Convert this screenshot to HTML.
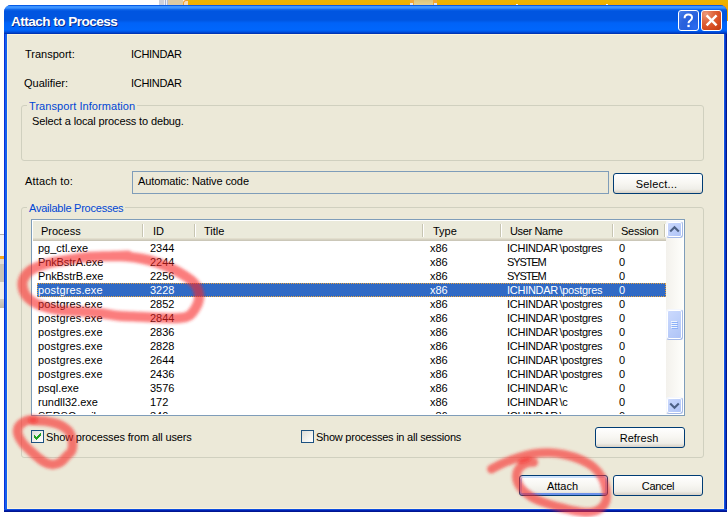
<!DOCTYPE html>
<html><head><meta charset="utf-8"><title>Attach to Process</title>
<style>
html,body{margin:0;padding:0;background:#fff;}
body{width:728px;height:517px;position:relative;overflow:hidden;font-family:"Liberation Sans",sans-serif;font-size:11px;color:#000;}
.abs{position:absolute;}
.t{position:absolute;white-space:nowrap;line-height:13px;height:13px;}
#win{position:absolute;left:4px;top:5px;width:723px;height:507px;background:linear-gradient(to right,#0831d9 0,#0831d9 1px,#1560eb 1px,#1560eb 3px,#0f5ae6 3px,#0f5ae6 720px,#1254e0 720px,#1254e0 721px,#0a36c8 721px,#0a36c8 722px,#001a8c 722px);border-radius:7px 7px 0 0;overflow:hidden;}
#tb{position:absolute;left:0;top:0;width:723px;height:29px;background:linear-gradient(to bottom,#0058e6 0px,#0a5fe8 1px,#3d93ff 1.5px,#3d93ff 3px,#1068ec 4.5px,#0055e0 6px,#0055e0 15px,#0063f8 18px,#0066fc 25px,#0050e0 27px,#0035b5 28.5px,#0035b5 29px);}
#title{position:absolute;left:7px;top:8px;color:#fff;font-weight:bold;font-size:13.6px;line-height:17px;letter-spacing:-0.55px;text-shadow:1px 1px 0 #0a2a8a;white-space:nowrap;}
#body{position:absolute;left:3px;top:29px;width:717px;height:475px;background:#ece9d8;box-shadow:inset 0 0 0 1px #fcf4dc;}
.gb{position:absolute;border:1px solid #d0d0bf;border-radius:3px;box-sizing:border-box;}
.gbl{position:absolute;color:#0046d5;background:#ece9d8;padding:0 2px;white-space:nowrap;line-height:13px;}
.btn{position:absolute;box-sizing:border-box;height:21px;border:1px solid #003c74;border-radius:3px;background:linear-gradient(to bottom,#ffffff 0%,#f8f7f3 45%,#efeee8 80%,#d6d0c5 100%);text-align:center;line-height:20px;}
.btn.def{box-shadow:inset 0 -2px 0 #6d92ea, inset 0 2px 0 #cde2fc, inset 2px 0 0 #a9c5f5, inset -2px 0 0 #a9c5f5;}
.cb{position:absolute;box-sizing:border-box;width:13px;height:13px;border:1px solid #1c5180;background:linear-gradient(135deg,#dcdcd7 0%,#f3f3ef 60%,#ffffff 100%);}
#lv{position:absolute;left:31px;top:219px;width:654px;height:197px;box-sizing:border-box;border:1px solid #7f9db9;background:#fff;overflow:hidden;}
#hdr{position:absolute;left:1px;top:1px;width:633px;height:20px;box-sizing:border-box;background:#ebeadb;border-bottom:1px solid #cbc7b8;box-shadow:inset 0 -1px 0 #d6d2c2, inset 0 -2px 0 #e2decd;}
#hdr span{position:absolute;top:4px;line-height:13px;white-space:nowrap;}
#hdr i{position:absolute;top:3px;width:1px;height:13px;background:#c7c5b2;border-right:1px solid #fff;}
.row{position:absolute;left:1px;width:633px;height:14px;}
.row span{position:absolute;top:0;line-height:14px;white-space:nowrap;}
.row em{font-style:normal;margin-left:1.4px;}
.row.sel{color:#fff;}
.row.sel:before{content:"";position:absolute;left:4px;top:0;width:629px;height:14px;box-sizing:border-box;background:#316ac5;border:1px dotted #e8a33d;}
#sb{position:absolute;left:634px;top:1px;width:17px;height:193px;background:linear-gradient(to right,#f3f1ec,#fefefb);}
.sbb{position:absolute;left:0;width:17px;box-sizing:border-box;border:1px solid;border-color:#f4f7fe #a6bae8 #a6bae8 #f4f7fe;border-radius:3px;background:linear-gradient(135deg,#cddafd 0%,#bdcffa 50%,#adc2f6 100%);box-shadow:inset 0 0 0 1px #fff;}
</style></head><body>
<!-- background behind window -->
<div class="abs" style="left:159px;top:0;width:5px;height:5px;background:#cdd0da"></div>
<div class="abs" style="left:164px;top:0;width:4px;height:5px;background:linear-gradient(to right,#eef0f6 0,#eef0f6 1px,#aab4d0 1px,#aab4d0 2px,#eef0f6 2px,#eef0f6 3px,#b8c0d8 3px)"></div>
<div class="abs" style="left:168px;top:0;width:15px;height:5px;background:#dccaa2"></div>
<div class="abs" style="left:183px;top:0;width:5px;height:6px;background:#f8dcb8;border-left:1px solid #f0a030;border-top:1px solid #f0a030;box-sizing:border-box;border-radius:3px 0 0 0"></div>
<div class="abs" style="left:188px;top:0;width:540px;height:21px;background:linear-gradient(to bottom,#ecb400 0,#eeb200 3px,#f5a900 5px,#f5a900 21px)"></div>
<div class="abs" style="left:410px;top:0;width:27px;height:5px;background:#f0a838"></div>
<div class="abs" style="left:414px;top:0;width:19px;height:5px;background:linear-gradient(to bottom,#dcc67c,#e6d290)"></div>
<div class="abs" style="left:410px;top:3px;width:3px;height:2px;background:#dfe8f8"></div>
<div class="abs" style="left:434px;top:3px;width:3px;height:2px;background:#dfe8f8"></div>
<div class="abs" style="left:516px;top:4px;width:2px;height:1px;background:#fff6e0"></div>
<div class="abs" style="left:606px;top:4px;width:2px;height:1px;background:#fff6e0"></div>
<div class="abs" style="left:0;top:234px;width:5px;height:1px;background:#b0b0b0"></div>
<div class="abs" style="left:0;top:235px;width:5px;height:21px;background:#f1f4fb"></div>
<div class="abs" style="left:0;top:256px;width:5px;height:3px;background:#f5a820"></div>
<div class="abs" style="left:0;top:259px;width:5px;height:5px;background:#e0ddd5"></div>
<div class="abs" style="left:0;top:264px;width:5px;height:18px;background:#c8c4b8"></div>
<div class="abs" style="left:0;top:282px;width:5px;height:17px;background:#efeee8"></div>
<div class="abs" style="left:0;top:299px;width:5px;height:9px;background:linear-gradient(to bottom,#d4d1c6,#bcb9ac)"></div>

<div id="win">
 <div id="tb"></div>
 <div id="title">Attach to Process</div>
 <!-- help button -->
 <div class="abs" style="left:674px;top:5px;width:21px;height:21px;box-sizing:border-box;border:1px solid #fff;border-radius:3px;background:radial-gradient(circle at 85% 85%,#2a6bf0 0%,#2460e0 35%,#2b62dc 60%,#4a83ee 100%);">
  <svg width="19" height="19" viewBox="0 0 19 19" style="position:absolute;left:0;top:0"><path d="M5.6 7.2 C5.6 4.6 7.4 3.6 9.3 3.6 C11.4 3.6 13 4.8 13 6.7 C13 8.4 12 9 10.8 9.9 C9.8 10.6 9.5 11.2 9.5 12.3" stroke="#fff" stroke-width="2" fill="none"/><rect x="8.4" y="13.8" width="2.3" height="2.3" fill="#fff"/></svg>
 </div>
 <!-- close button -->
 <div class="abs" style="left:697px;top:5px;width:21px;height:21px;box-sizing:border-box;border:1px solid #fff;border-radius:3px;background:radial-gradient(circle at 20% 15%,#ec9a7c 0%,#e0683f 35%,#d84e22 65%,#bd3a12 100%);">
  <svg width="19" height="19" viewBox="0 0 19 19" style="position:absolute;left:0;top:0"><path d="M4.6 4.4 L14.6 14.4 M14.6 4.4 L4.6 14.4" stroke="#fff" stroke-width="2.4" stroke-linecap="butt"/></svg>
 </div>
 <div id="body"></div>
 <div class="abs" style="left:0;top:504px;width:723px;height:3px;background:linear-gradient(to bottom,#1050e0 0,#1050e0 1px,#0020b0 1px,#0020b0 2px,#001590 2px)"></div>
</div>

<div class="t" style="left:25px;top:48px">Transport:</div>
<div class="t" style="left:131px;top:48px;letter-spacing:-0.3px">ICHINDAR</div>
<div class="t" style="left:24px;top:77px">Qualifier:</div>
<div class="t" style="left:131px;top:77px;letter-spacing:-0.3px">ICHINDAR</div>

<div class="gb" style="left:21px;top:105px;width:683px;height:56px"></div>
<div class="gbl" style="left:27px;top:100px;letter-spacing:0.07px">Transport Information</div>
<div class="t" style="left:32px;top:115px;letter-spacing:-0.13px">Select a local process to debug.</div>

<div class="t" style="left:25px;top:175px;letter-spacing:0.15px">Attach to:</div>
<div class="abs" style="left:132px;top:171px;width:477px;height:23px;box-sizing:border-box;border:1px solid #7f9db9;background:#ece9d8"></div>
<div class="t" style="left:138px;top:175px;letter-spacing:-0.1px">Automatic: Native code</div>
<div class="btn" style="left:613px;top:173px;width:90px;letter-spacing:0.2px;text-indent:-3px">Select...</div>

<div class="gb" style="left:21px;top:207px;width:683px;height:251px"></div>
<div class="gbl" style="left:27px;top:202px;letter-spacing:-0.24px">Available Processes</div>

<div id="lv">
 <div id="hdr">
  <span style="left:8px">Process</span><i style="left:109px"></i>
  <span style="left:120px">ID</span><i style="left:161px"></i>
  <span style="left:171px">Title</span><i style="left:389px"></i>
  <span style="left:400px">Type</span><i style="left:467px"></i>
  <span style="left:477px;letter-spacing:-0.35px">User Name</span><i style="left:579px"></i>
  <span style="left:588px;letter-spacing:-0.25px">Session</span><i style="left:631px"></i>
 </div>
 <div class="row" style="top:21px"><span style="left:5px;letter-spacing:0">pg_ctl.exe</span><span style="left:117px">2344</span><span style="left:397px">x86</span><span style="left:474px;letter-spacing:-0.27px">ICHINDAR<em>\</em>postgres</span><span style="left:586px">0</span></div>
<div class="row" style="top:35px"><span style="left:5px;letter-spacing:-0.12px">PnkBstrA.exe</span><span style="left:117px">2244</span><span style="left:397px">x86</span><span style="left:474px;letter-spacing:-1.1px">SYSTEM</span><span style="left:586px">0</span></div>
<div class="row" style="top:49px"><span style="left:5px;letter-spacing:-0.12px">PnkBstrB.exe</span><span style="left:117px">2256</span><span style="left:397px">x86</span><span style="left:474px;letter-spacing:-1.1px">SYSTEM</span><span style="left:586px">0</span></div>
<div class="row sel" style="top:63px"><span style="left:5px;letter-spacing:0.15px">postgres.exe</span><span style="left:117px">3228</span><span style="left:397px">x86</span><span style="left:474px;letter-spacing:-0.27px">ICHINDAR<em>\</em>postgres</span><span style="left:586px">0</span></div>
<div class="row" style="top:77px"><span style="left:5px;letter-spacing:0.15px">postgres.exe</span><span style="left:117px">2852</span><span style="left:397px">x86</span><span style="left:474px;letter-spacing:-0.27px">ICHINDAR<em>\</em>postgres</span><span style="left:586px">0</span></div>
<div class="row" style="top:91px"><span style="left:5px;letter-spacing:0.15px">postgres.exe</span><span style="left:117px">2844</span><span style="left:397px">x86</span><span style="left:474px;letter-spacing:-0.27px">ICHINDAR<em>\</em>postgres</span><span style="left:586px">0</span></div>
<div class="row" style="top:105px"><span style="left:5px;letter-spacing:0.15px">postgres.exe</span><span style="left:117px">2836</span><span style="left:397px">x86</span><span style="left:474px;letter-spacing:-0.27px">ICHINDAR<em>\</em>postgres</span><span style="left:586px">0</span></div>
<div class="row" style="top:119px"><span style="left:5px;letter-spacing:0.15px">postgres.exe</span><span style="left:117px">2828</span><span style="left:397px">x86</span><span style="left:474px;letter-spacing:-0.27px">ICHINDAR<em>\</em>postgres</span><span style="left:586px">0</span></div>
<div class="row" style="top:133px"><span style="left:5px;letter-spacing:0.15px">postgres.exe</span><span style="left:117px">2644</span><span style="left:397px">x86</span><span style="left:474px;letter-spacing:-0.27px">ICHINDAR<em>\</em>postgres</span><span style="left:586px">0</span></div>
<div class="row" style="top:147px"><span style="left:5px;letter-spacing:0.15px">postgres.exe</span><span style="left:117px">2436</span><span style="left:397px">x86</span><span style="left:474px;letter-spacing:-0.27px">ICHINDAR<em>\</em>postgres</span><span style="left:586px">0</span></div>
<div class="row" style="top:161px"><span style="left:5px;letter-spacing:0">psql.exe</span><span style="left:117px">3576</span><span style="left:397px">x86</span><span style="left:474px;letter-spacing:-0.27px">ICHINDAR<em>\</em>c</span><span style="left:586px">0</span></div>
<div class="row" style="top:175px"><span style="left:5px;letter-spacing:0">rundll32.exe</span><span style="left:117px">172</span><span style="left:397px">x86</span><span style="left:474px;letter-spacing:-0.27px">ICHINDAR<em>\</em>c</span><span style="left:586px">0</span></div>
<div class="row" style="top:189px"><span style="left:5px;letter-spacing:0">SEDSCmail.exe</span><span style="left:117px">340</span><span style="left:397px">x86</span><span style="left:474px;letter-spacing:-0.27px">ICHINDAR<em>\</em>c</span><span style="left:586px">0</span></div>

 <div class="abs" style="left:0;top:194px;width:652px;height:1px;background:#fff"></div>
 <div id="sb">
  <div class="sbb" style="top:0;height:17px"><svg width="15" height="15" style="position:absolute;left:0;top:0"><path d="M3.2 9.6 L7.5 5.3 L11.8 9.6" stroke="#4d6185" stroke-width="2.1" fill="none"/></svg></div>
  <div class="sbb" style="top:88px;height:31px"><svg width="15" height="29" style="position:absolute;left:0;top:0"><path d="M4 11.5h6M4 13.5h6M4 15.5h6M4 17.5h6" stroke="#eef4fe" stroke-width="1"/><path d="M5 12.5h6M5 14.5h6M5 16.5h6M5 18.5h6" stroke="#8cb0f8" stroke-width="1"/></svg></div>
  <div class="sbb" style="top:176px;height:17px"><svg width="15" height="15" style="position:absolute;left:0;top:0"><path d="M3.2 5.4 L7.5 9.7 L11.8 5.4" stroke="#4d6185" stroke-width="2.1" fill="none"/></svg></div>
 </div>
</div>

<div class="cb" style="left:31px;top:430px"><svg width="11" height="11" style="position:absolute;left:0;top:0"><path d="M2 4h1v3h-1z M3 5h1v3h-1z M4 6h1v3h-1z M5 5h1v3h-1z M6 4h1v3h-1z M7 3h1v3h-1z M8 2h1v3h-1z" fill="#21a121"/></svg></div>
<div class="t" style="left:46px;top:431px;letter-spacing:-0.14px">Show processes from all users</div>
<div class="cb" style="left:301px;top:430px"></div>
<div class="t" style="left:316px;top:431px;letter-spacing:-0.24px">Show processes in all sessions</div>
<div class="btn" style="left:595px;top:427px;width:90px;text-indent:-2px">Refresh</div>

<div class="btn def" style="left:519px;top:475px;width:89px;text-indent:-2px">Attach</div>
<div class="btn" style="left:613px;top:475px;width:90px;letter-spacing:-0.3px">Cancel</div>

<!-- red annotations -->
<svg class="abs" style="left:0;top:0;pointer-events:none" width="728" height="517" viewBox="0 0 728 517">
 <defs><filter id="bl" x="-5%" y="-5%" width="110%" height="110%"><feGaussianBlur stdDeviation="1.4"/></filter></defs>
 <g fill="none" stroke="#f8282a" stroke-opacity="0.6" stroke-linecap="round" stroke-linejoin="round" filter="url(#bl)">
  <path stroke-width="10" d="M128.0 255.5 C125.0 255.6 114.2 256.1 110.0 256.2 C105.8 256.3 106.7 256.1 102.9 256.2 C99.1 256.3 92.6 256.5 87.4 257.0 C82.2 257.5 77.1 258.4 71.9 259.2 C66.7 260.0 61.5 260.6 56.4 261.6 C51.2 262.7 45.4 264.0 41.0 265.5 C36.6 267.0 33.0 268.5 30.1 270.6 C27.2 272.7 25.2 275.4 23.9 277.9 C22.6 280.4 22.1 282.8 22.4 285.6 C22.7 288.4 23.9 292.3 25.5 294.9 C27.1 297.5 29.1 299.2 31.7 301.0 C34.3 302.8 36.9 304.3 41.0 305.7 C45.1 307.1 51.2 308.7 56.4 309.6 C61.5 310.5 66.7 310.7 71.9 311.1 C77.1 311.5 82.2 311.5 87.4 311.9 C92.6 312.3 97.9 312.9 102.9 313.5 C108.0 314.1 112.7 315.3 117.7 315.8 C122.8 316.3 128.0 316.4 133.2 316.6 C138.4 316.9 143.5 317.1 148.7 317.3 C153.9 317.6 159.0 318.0 164.2 318.1 C169.4 318.2 175.6 318.5 179.7 318.1 C183.8 317.7 186.3 317.4 188.9 315.8 C191.5 314.2 193.4 311.5 195.1 308.8 C196.8 306.1 198.5 302.6 199.0 299.5 C199.5 296.4 199.1 293.0 198.2 290.2 C197.3 287.4 195.9 284.9 193.6 282.5 C191.3 280.1 187.9 277.8 184.3 275.5 C180.7 273.2 176.6 270.8 171.9 268.6 C167.2 266.4 161.6 264.1 156.4 262.4 C151.2 260.7 146.2 259.5 141.0 258.5 C135.8 257.5 130.3 256.9 125.5 256.5 C120.7 256.1 114.2 256.1 112.0 256.0"/>
  <path stroke-width="9.4" d="M32.5 420.5 C34.8 420.6 42.0 420.7 46.4 421.3 C50.8 421.9 55.2 422.8 58.8 424.3 C62.4 425.8 65.9 428.1 68.1 430.5 C70.3 432.9 71.3 435.8 72.0 439.0 C72.7 442.2 72.9 447.0 72.0 449.9 C71.1 452.8 68.5 454.0 66.6 456.1 C64.7 458.2 62.7 460.9 60.4 462.3 C58.1 463.7 55.5 464.7 52.6 464.6 C49.8 464.5 46.7 463.6 43.3 461.5 C39.9 459.4 35.4 455.4 32.0 452.3 C28.6 449.2 25.0 446.0 22.7 443.0 C20.4 440.0 18.7 437.1 18.0 434.4 C17.3 431.7 17.5 428.9 18.6 426.7 C19.7 424.5 22.5 422.5 24.8 421.3 C27.1 420.1 30.5 419.8 32.5 419.7 C34.5 419.6 36.2 420.4 37.0 420.5"/>
  <path stroke-width="8.8" d="M491.5 469.0 C493.4 468.1 498.5 465.2 503.0 463.3 C507.5 461.4 513.4 459.1 518.5 457.5 C523.6 455.9 528.7 454.5 533.8 453.7 C538.9 452.9 544.1 452.5 549.2 452.7 C554.3 452.9 559.5 453.5 564.6 454.6 C569.7 455.7 575.2 457.3 580.0 459.4 C584.8 461.5 589.8 464.1 593.5 467.1 C597.2 470.2 600.0 474.0 602.1 477.7 C604.2 481.4 605.4 485.3 606.0 489.2 C606.6 493.1 607.1 497.4 606.0 500.8 C604.9 504.2 602.2 507.5 599.2 509.4 C596.2 511.3 592.2 512.1 587.7 512.3 C583.2 512.5 577.4 511.4 572.3 510.4 C567.2 509.4 562.0 507.9 556.9 506.5 C551.8 505.1 546.0 503.4 541.5 501.7 C537.0 499.9 533.5 498.4 530.0 496.0 C526.5 493.6 522.6 490.4 520.4 487.3 C518.1 484.2 516.8 480.8 516.5 477.7 C516.2 474.6 516.9 471.4 518.5 469.0 C520.1 466.6 523.7 464.4 526.2 463.3 C528.8 462.2 532.5 462.5 533.8 462.3"/>
 </g>
 <g fill="#f81818" fill-opacity="0.42" filter="url(#bl)">
  <ellipse cx="524.5" cy="460.3" rx="7" ry="2.6" transform="rotate(-18 524.5 460.3)"/>
  <ellipse cx="33" cy="420.3" rx="4.5" ry="3.2"/>
 </g>
</svg>
</body></html>
